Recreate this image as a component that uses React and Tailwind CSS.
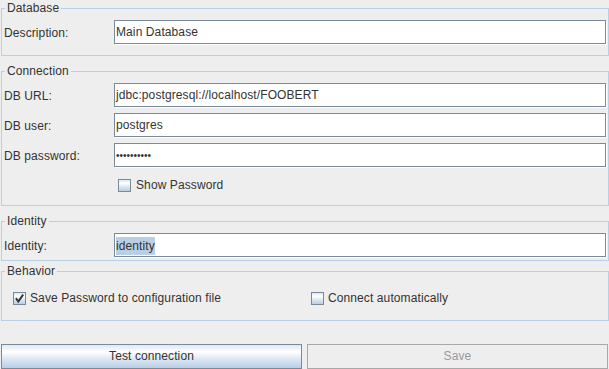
import React from "react";

function Field({ children }) {
  return (
    <div className="h-[24px] border border-[#7a8a99] bg-white shadow-[1px_1px_0_#ffffff] pl-[1px] leading-[23px] overflow-hidden whitespace-nowrap">
      {children}
    </div>
  );
}

function Check({ checked }) {
  return (
    <span className="w-[13px] h-[13px] shrink-0 border border-[#7a8a99] bg-[linear-gradient(to_bottom,#dde8f3_0%,#ffffff_30%,#dde8f3_60%,#b8cfe5_100%)] flex items-center justify-center">
      {checked && (
        <svg width="11" height="11" viewBox="0 0 11 11">
          <path d="M2.5 6 L4.3 8.6 L8.6 2.4" fill="none" stroke="#333333" strokeWidth="2" strokeLinecap="square" />
        </svg>
      )}
    </span>
  );
}

function Group({ title, className = "", children }) {
  return (
    <fieldset className={"ml-[1px] w-[608px] border border-[#b8cfe5] " + className}>
      <legend className="ml-[3px] px-[2px] leading-[15px]">{title}</legend>
      {children}
    </fieldset>
  );
}

function Row({ label, children }) {
  return (
    <div className="grid grid-cols-[110px_1fr] items-start">
      <span className="h-[24px] leading-[26px] whitespace-nowrap">{label}</span>
      {children}
    </div>
  );
}

export default function App() {
  return (
    <div className="w-[609px] h-[369px] overflow-hidden bg-[#eeeeee] text-[#333333] text-[12px] tracking-[0.1px] font-['Liberation_Sans',Arial,sans-serif] pt-[1px]">
      <Group title="Database">
        <div className="pl-[2px] pr-[2px] pt-[4px] pb-[11px]">
          <Row label="Description:">
            <Field>Main Database</Field>
          </Row>
        </div>
      </Group>

      <Group title="Connection" className="mt-[8px]">
        <div className="pl-[2px] pr-[2px] pt-[4px] pb-[8px] flex flex-col gap-[6px]">
          <Row label="DB URL:">
            <Field>jdbc:postgresql://localhost/FOOBERT</Field>
          </Row>
          <Row label="DB user:">
            <Field>postgres</Field>
          </Row>
          <Row label="DB password:">
            <Field>
              <span className="text-[10px] tracking-[0px]">••••••••••</span>
            </Field>
          </Row>
          <div className="h-[24px] flex items-center gap-[5px] pl-[114px]">
            <Check />
            <span>Show Password</span>
          </div>
        </div>
      </Group>

      <Group title="Identity" className="mt-[8px]">
        <div className="pl-[2px] pr-[2px] pt-[4px] pb-[3px]">
          <Row label="Identity:">
            <Field>
              <span className="inline-block bg-[#b8cfe5] leading-[18px] align-middle">identity</span>
            </Field>
          </Row>
        </div>
      </Group>

      <Group title="Behavior" className="mt-[3px]">
        <div className="pl-[11px] pt-[7px] pb-[10px] grid grid-cols-[298px_1fr]">
          <div className="h-[24px] flex items-center gap-[4px]">
            <Check checked />
            <span>Save Password to configuration file</span>
          </div>
          <div className="h-[24px] flex items-center gap-[4px]">
            <Check />
            <span>Connect automatically</span>
          </div>
        </div>
      </Group>

      <div className="mt-[23px] ml-[1px] flex gap-[5px]">
        <button className="w-[301px] h-[25px] border border-[#7a8a99] bg-[linear-gradient(to_bottom,#dde8f3_0%,#ffffff_30%,#dde8f3_60%,#b8cfe5_100%)] text-[#333333] leading-[23px] text-center">
          Test connection
        </button>
        <button className="w-[301px] h-[25px] border border-[#a8a8a8] bg-[#eeeeee] text-[#999999] leading-[23px] text-center">
          Save
        </button>
      </div>
    </div>
  );
}
